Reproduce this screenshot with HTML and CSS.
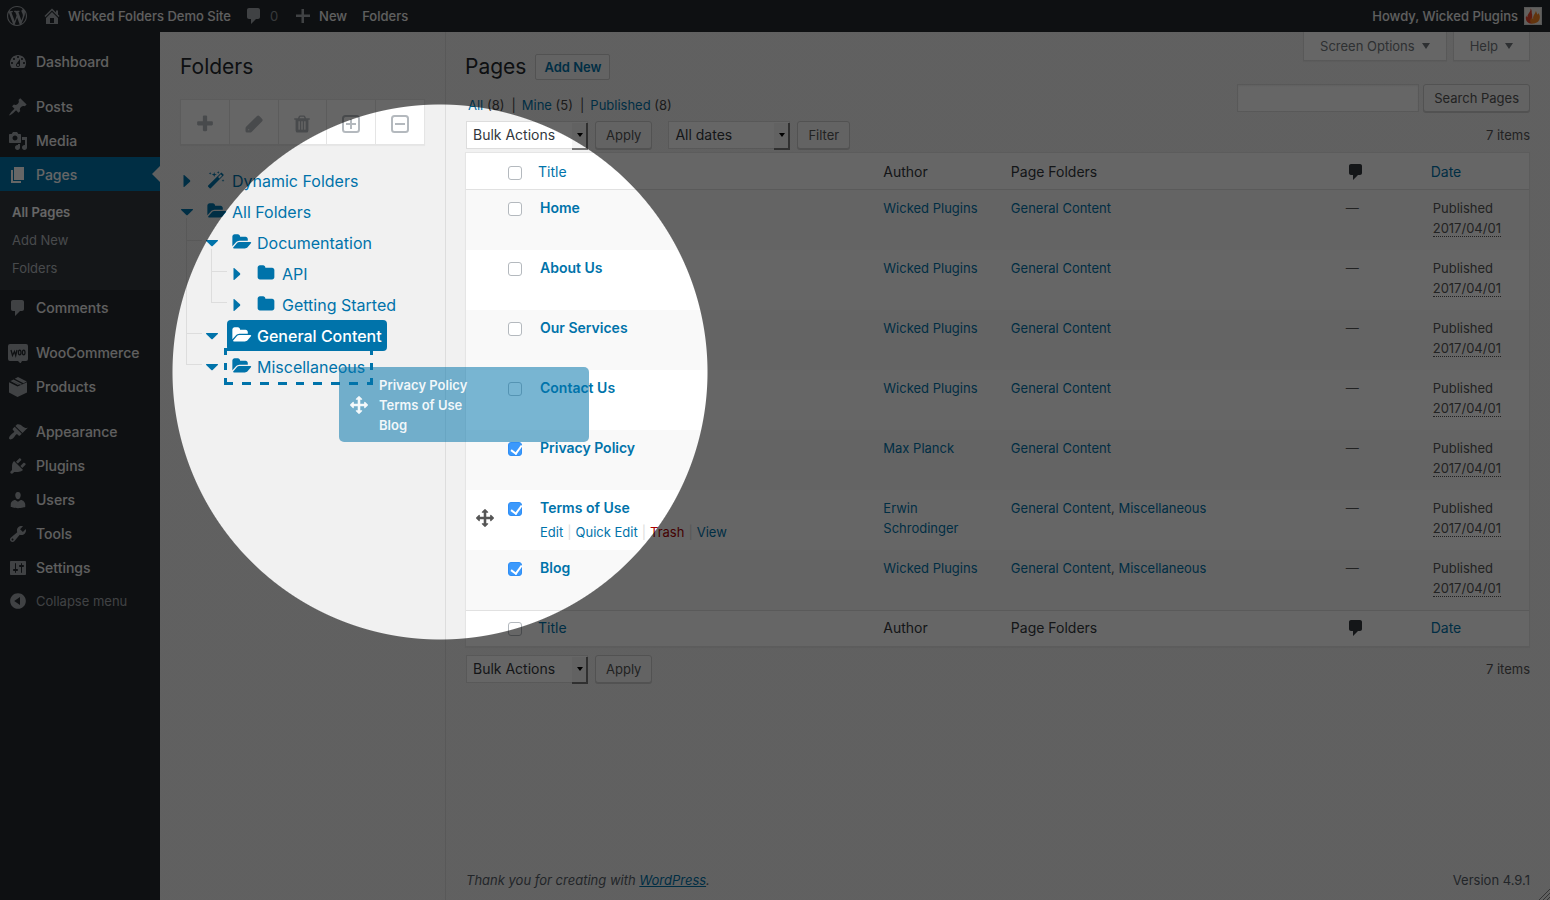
FILE: index.html
```html
<!DOCTYPE html>
<html lang="en">
<head>
<meta charset="utf-8">
<title>Pages ‹ Wicked Folders Demo Site — WordPress</title>
<link rel="stylesheet" href="styles.css">
</head>
<body>
<svg class="sprite" aria-hidden="true">
  <symbol id="i-wordpress" viewBox="0 0 20 20"><path d="M20 10c0-5.51-4.49-10-10-10C4.48 0 0 4.49 0 10c0 5.52 4.48 10 10 10 5.51 0 10-4.48 10-10zM7.78 15.37L4.37 6.22c.55-.02 1.17-.08 1.17-.08.5-.06.44-1.13-.06-1.11 0 0-1.45.11-2.37.11-.18 0-.37 0-.58-.01C4.12 2.69 6.87 1.11 10 1.11c2.33 0 4.45.87 6.05 2.34-.68-.11-1.65.39-1.65 1.58 0 .74.45 1.36.9 2.1.35.61.55 1.36.55 2.46 0 1.49-1.4 5-1.4 5l-3.03-8.37c.54-.02.82-.17.82-.17.5-.05.44-1.25-.06-1.22 0 0-1.44.12-2.38.12-.87 0-2.33-.12-2.33-.12-.5-.03-.56 1.2-.06 1.22l.92.08 1.26 3.41zM17.41 10c.24-.64.74-1.87.43-4.25.7 1.29 1.05 2.71 1.05 4.25 0 3.29-1.73 6.24-4.4 7.78.97-2.59 1.94-5.2 2.92-7.78zM6.1 18.09C3.12 16.65 1.11 13.53 1.11 10c0-1.3.23-2.48.72-3.59C3.25 10.3 4.67 14.2 6.1 18.09zm4.03-6.63l2.58 6.98c-.86.29-1.76.45-2.71.45-.79 0-1.57-.11-2.29-.33.81-2.38 1.62-4.74 2.42-7.1z"/></symbol>
  <symbol id="i-home" viewBox="0 0 20 20"><path d="M16 8.500l1.530 1.530-1.060 1.060L10 4.600l-6.470 6.490-1.060-1.060L10 2.500l4 4v-2h2v4zm-6-2.460l6 5.990V18H4v-5.970zM12 17v-5H8v5h4z"/></symbol>
  <symbol id="i-comment" viewBox="0 0 20 20"><path d="M5 2h9c1.100 0 2 .9 2 2v7c0 1.100-.9 2-2 2h-2l-5 5v-5H5c-1.100 0-2-.9-2-2V4c0-1.100.9-2 2-2z"/></symbol>
  <symbol id="i-new" viewBox="0 0 20 20"><path d="M8.500 3h2.500v5.500H17V11h-6v6H8.500v-6H3V8.500h5.500z"/></symbol>
  <symbol id="i-dashboard" viewBox="0 0 20 20"><path d="M3.760 16h12.480c1.100-1.370 1.760-3.110 1.760-5 0-4.420-3.580-8-8-8s-8 3.580-8 8c0 1.890.66 3.630 1.760 5zM10 4c.55 0 1 .45 1 1s-.45 1-1 1-1-.45-1-1 .45-1 1-1zM6 6c.55 0 1 .45 1 1s-.45 1-1 1-1-.45-1-1 .45-1 1-1zm8 0c.55 0 1 .45 1 1s-.45 1-1 1-1-.45-1-1 .45-1 1-1zm-5.370 5.550L12 7v6c0 1.100-.9 2-2 2s-2-.9-2-2c0-.57.24-1.080.63-1.450zM4 10c.55 0 1 .45 1 1s-.45 1-1 1-1-.45-1-1 .45-1 1-1zm12 0c.55 0 1 .45 1 1s-.45 1-1 1-1-.45-1-1 .45-1 1-1zm-5 3c0-.55-.45-1-1-1s-1 .45-1 1 .45 1 1 1 1-.45 1-1z"/></symbol>
  <symbol id="i-post" viewBox="0 0 20 20"><path d="M10.440 3.020l1.820-1.820 6.360 6.350-1.830 1.820c-1.050-.68-2.480-.57-3.410.36l-.75.75c-.92.93-1.040 2.350-.35 3.410l-1.830 1.820-2.410-2.410-2.800 2.790c-.42.42-3.380 2.710-3.800 2.290s1.860-3.390 2.280-3.810l2.790-2.790L4.100 9.360l1.830-1.820c1.050.69 2.480.57 3.400-.36l.75-.75c.93-.92 1.050-2.350.36-3.410z"/></symbol>
  <symbol id="i-media" viewBox="0 0 20 20"><path d="M13 11V4c0-.55-.45-1-1-1h-1.670L9 1H5L3.670 3H2c-.55 0-1 .45-1 1v7c0 .55.45 1 1 1h10c.55 0 1-.45 1-1zM7 4.500c1.380 0 2.500 1.120 2.500 2.500S8.380 9.500 7 9.500 4.500 8.380 4.500 7 5.620 4.500 7 4.500zM14 6h5v10.500c0 1.380-1.120 2.500-2.500 2.500S14 17.880 14 16.500s1.120-2.500 2.500-2.500c.17 0 .34.02.5.05V9h-3V6zm-4 8.050V13h2v3.500c0 1.380-1.120 2.500-2.500 2.500S7 17.880 7 16.500 8.120 14 9.500 14c.17 0 .34.02.5.05z"/></symbol>
  <symbol id="i-page" viewBox="0 0 20 20"><path d="M6 15V2h10v13H6zm-1 1h8v2H3V5h2v11z"/></symbol>
  <symbol id="i-woo" viewBox="0 0 20 20"><path d="M2 1h16a2 2 0 0 1 2 2v13a2 2 0 0 1-2 2h-4l-1.500 2.500L10 18H2a2 2 0 0 1-2-2V3a2 2 0 0 1 2-2z"/><path class="cut" d="M3 7l1.500 5.500L6.500 8.500l1.200 4L9 7"/><ellipse class="cut" cx="11.700" cy="9.500" rx="1.300" ry="2.300"/><ellipse class="cut" cx="15.700" cy="9.500" rx="1.300" ry="2.300"/></symbol>
  <symbol id="i-product" viewBox="0 0 20 20"><path d="M10 0l8.800 4.500-3.300 1.700-8.700-4.500zM5.500 2.400l8.600 4.500-1.800.9-8.600-4.400zM2.400 4.100L10 8.100l1.200-.6-7.600-3.900zM1 5.200l8.500 4.300V20L1 15.500zM19 5.200V15.500L9.500 20V9.500z"/></symbol>
  <symbol id="i-appearance" viewBox="0 0 20 20"><path d="M14.480 11.060L7.410 3.990l1.500-1.500c.5-.56 2.300-.47 3.510.32 1.210.8 1.430 1.280 2.910 2.100 1.180.64 2.450 1.260 4.450.85zm-.71.71L6.700 4.700 4.930 6.470c-.39.39-.39 1.020 0 1.410l1.060 1.060c.39.39.39 1.030 0 1.420-.6.6-1.430 1.110-2.210 1.690-.35.26-.7.53-1.010.84C1.430 14.230.4 16.080 1.400 17.070c.99 1 2.840-.03 4.180-1.360.31-.31.58-.66.85-1.020.57-.78 1.080-1.610 1.690-2.210.39-.39 1.020-.39 1.410 0l1.060 1.060c.39.39 1.020.39 1.410 0z"/></symbol>
  <symbol id="i-plugins" viewBox="0 0 20 20"><path d="M13.110 4.360L9.870 7.600 8 5.730l3.240-3.240c.35-.34 1.050-.2 1.560.32.52.51.66 1.210.31 1.550zm-8 1.770l.91-1.120 9.010 9.010-1.190.84c-.71.71-2.630 1.160-3.820 1.160H6.140L4.900 17.260c-.59.59-1.540.59-2.120 0-.59-.58-.59-1.530 0-2.120l1.240-1.240v-3.880c0-1.130.4-3.190 1.090-3.890zm7.260 3.970l3.240-3.240c.34-.35 1.040-.21 1.550.31.52.51.66 1.210.31 1.550l-3.240 3.250z"/></symbol>
  <symbol id="i-users" viewBox="0 0 20 20"><path d="M10 9.250c-2.270 0-2.730-3.440-2.730-3.440C7 4.020 7.820 2 9.970 2c2.160 0 2.980 2.020 2.710 3.810 0 0-.41 3.440-2.680 3.440zm0 2.570L12.720 10c2.390 0 4.520 2.330 4.520 4.530v2.490s-3.650 1.130-7.240 1.130c-3.650 0-7.240-1.130-7.240-1.130v-2.490c0-2.250 1.940-4.480 4.470-4.480z"/></symbol>
  <symbol id="i-tools" viewBox="0 0 20 20"><path d="M16.680 9.770c-1.340 1.340-3.300 1.670-4.950.99l-5.410 6.520c-.99.99-2.590.99-3.580 0s-.99-2.590 0-3.570l6.520-5.420c-.68-1.650-.35-3.610.99-4.950 1.280-1.280 3.120-1.620 4.720-1.060l-2.890 2.890 2.820 2.820 2.860-2.870c.53 1.580.18 3.390-1.080 4.650zM3.810 16.210c.4.39 1.040.39 1.430 0 .4-.4.4-1.040 0-1.430-.39-.4-1.030-.4-1.430 0-.39.39-.39 1.030 0 1.430z"/></symbol>
  <symbol id="i-settings" viewBox="0 0 20 20"><path d="M18 16V4c0-.55-.45-1-1-1H3c-.55 0-1 .45-1 1v12c0 .55.45 1 1 1h14c.55 0 1-.45 1-1zM8 11h1c.55 0 1 .45 1 1s-.45 1-1 1H8v1.500c0 .28-.22.5-.5.5s-.5-.22-.5-.5V13H6c-.55 0-1-.45-1-1s.45-1 1-1h1V5.500c0-.28.22-.5.5-.5s.5.22.5.5V11zm5-2h-1c-.55 0-1-.45-1-1s.45-1 1-1h1V5.500c0-.28.22-.5.5-.5s.5.22.5.5V7h1c.55 0 1 .45 1 1s-.45 1-1 1h-1v5.500c0 .28-.22.5-.5.5s-.5-.22-.5-.5V9z"/></symbol>
  <symbol id="i-collapse" viewBox="0 0 20 20"><path fill-rule="evenodd" d="M10 2.160c4.330 0 7.840 3.510 7.840 7.840s-3.510 7.840-7.840 7.840S2.160 14.330 2.160 10 5.670 2.160 10 2.160zm2 11.720V6.120L6.180 9.970z"/></symbol>
  <symbol id="i-plus" viewBox="0 0 1792 1792"><path d="M1600 736v192q0 40-28 68t-68 28h-416v416q0 40-28 68t-68 28h-192q-40 0-68-28t-28-68v-416h-416q-40 0-68-28t-28-68v-192q0-40 28-68t68-28h416v-416q0-40 28-68t68-28h192q40 0 68 28t28 68v416h416q40 0 68 28t28 68z"/></symbol>
  <symbol id="i-pencil" viewBox="0 0 20 20"><path fill-rule="evenodd" d="M12.800 2.300a2 2 0 0 1 2.800 0l2.400 2.400a2 2 0 0 1 0 2.800L7.600 17.900q-.6.600-1.500.600H3q-1.500 0-1.500-1.500v-2.800q0-.9.6-1.500zM4.200 15.200v1h1v-1z"/></symbol>
  <symbol id="i-trash" viewBox="0 0 1792 1792"><path d="M704 1376v-704q0-14-9-23t-23-9h-64q-14 0-23 9t-9 23v704q0 14 9 23t23 9h64q14 0 23-9t9-23zm256 0v-704q0-14-9-23t-23-9h-64q-14 0-23 9t-9 23v704q0 14 9 23t23 9h64q14 0 23-9t9-23zm256 0v-704q0-14-9-23t-23-9h-64q-14 0-23 9t-9 23v704q0 14 9 23t23 9h64q14 0 23-9t9-23zm-544-992h448l-48-117q-7-9-17-11h-317q-10 2-17 11zm928 32v64q0 14-9 23t-23 9h-96v948q0 83-47 143.500t-113 60.500h-832q-66 0-113-58.500t-47-141.500v-952h-96q-14 0-23-9t-9-23v-64q0-14 9-23t23-9h309l70-167q15-37 54-63t79-26h320q40 0 79 26t54 63l70 167h309q14 0 23 9t9 23z"/></symbol>
  <symbol id="i-expand" viewBox="0 0 20 20"><rect class="line" x="2" y="2" width="16" height="16" rx="2.500"/><path class="line" d="M10 5v10M5 10h10"/></symbol>
  <symbol id="i-shrink" viewBox="0 0 20 20"><rect class="line" x="2" y="2" width="16" height="16" rx="2.500"/><path class="line" d="M5 10h10"/></symbol>
  <symbol id="i-magic" viewBox="0 0 20 20"><path fill-rule="evenodd" d="M1.300 16.200L15.400 2.100q.6-.6 1.200 0l1.700 1.700q.6.600 0 1.200L4.200 19.100q-.6.600-1.200 0l-1.700-1.700q-.6-.6 0-1.200zM12.300 6.700l1.500 1.500 3-3-1.500-1.500z"/><path d="M3.500 1l.4 1.200 1.200.4-1.200.4-.4 1.200-.4-1.200-1.200-.4 1.200-.4zM8 1l.7 2.200 2.200.7-2.200.7L8 6.800l-.7-2.200-2.200-.7 2.200-.7zM12.500 0l.4 1.200 1.200.4-1.200.4-.4 1.200-.4-1.200-1.200-.4 1.200-.4zM17.800 9l.4 1.200 1.200.4-1.200.4-.4 1.200-.4-1.200-1.200-.4 1.200-.4z"/></symbol>
  <symbol id="i-open" viewBox="0 0 1920 1792"><path d="M1879 952q0 31-31 66l-336 396q-43 51-120.500 86.500t-143.500 35.500h-1088q-34 0-60.500-13t-26.500-43q0-31 31-66l336-396q43-51 120.500-86.500t143.500-35.500h1088q34 0 60.500 13t26.500 43zm-343-344v160h-832q-94 0-197 47.500t-164 119.500l-337 396-5 6q0-4-.5-12.500t-.5-12.500v-960q0-92 66-158t158-66h320q92 0 158 66t66 158v32h544q92 0 158 66t66 158z"/></symbol>
  <symbol id="i-folder" viewBox="0 0 1792 1792"><path d="M1728 608v704q0 92-66 158t-158 66h-1216q-92 0-158-66t-66-158v-960q0-92 66-158t158-66h320q92 0 158 66t66 158v32h672q92 0 158 66t66 158z"/></symbol>
  <symbol id="i-right" viewBox="0 0 14 14"><path d="M3.500 1.500q0-1 1-.3L10 6.300q.6.700 0 1.400l-5.500 5.100q-1 .7-1-.3z"/></symbol>
  <symbol id="i-down" viewBox="0 0 14 14"><path d="M1.500 4h11q1 0 .3 1L7.700 10q-.7.600-1.400 0L1.200 5q-.7-1 .3-1z"/></symbol>
  <symbol id="i-move" viewBox="0 0 1792 1792"><path d="M1792 896q0 26-19 45l-256 256q-19 19-45 19t-45-19-19-45v-128h-384v384h128q26 0 45 19t19 45-19 45l-256 256q-19 19-45 19t-45-19l-256-256q-19-19-19-45t19-45 45-19h128v-384h-384v128q0 26-19 45t-45 19-45-19l-256-256q-19-19-19-45t19-45l256-256q19-19 45-19t45 19 19 45v128h384v-384h-128q-26 0-45-19t-19-45 19-45l256-256q19-19 45-19t45 19l256 256q19 19 19 45t-19 45-45 19h-128v384h384v-128q0-26 19-45t45-19 45 19l256 256q19 19 19 45z"/></symbol>
</svg>

<header class="adminbar">
  <nav class="bar-group" aria-label="Toolbar">
    <a href="#" aria-label="About WordPress"><svg class="icon"><use href="#i-wordpress"/></svg></a>
    <a class="bar-site" href="#"><svg class="icon"><use href="#i-home"/></svg>Wicked Folders Demo Site</a>
    <a class="bar-comments" href="#"><svg class="icon"><use href="#i-comment"/></svg><span class="dim">0</span></a>
    <a class="bar-new" href="#"><svg class="icon"><use href="#i-new"/></svg>New</a>
    <a class="bar-folders" href="#">Folders</a>
  </nav>
  <a class="bar-user" href="#">Howdy, Wicked Plugins
    <svg class="avatar" viewBox="0 0 18 18"><rect width="18" height="18" fill="#d8d8d8"/><rect x="1" y="1" width="16" height="16" fill="#f4efe9"/><path fill="#e8432a" d="M6.500 1.500c2 2 .8 4 1.600 5.500L8.500 16.500H6C2.500 15.500 1 12 2.200 8.500c.3 1 .6 1.500 1.300 1.800C3 7 7 5 6.500 1.500z"/><path fill="#f58220" d="M12 2.500c-.5 2 1 3 1.300 5 .7-.3 1-.8 1.200-1.500 1 1.500 1.500 3 1.300 5-.3 3-2.500 5-5.800 5.500H7.500c-2-1.500-1.700-4.200.5-6 .1 1 .6 1.500 1.200 1.700C8.500 8 12.300 6.500 12 2.500z"/></svg>
  </a>
</header>

<div class="shell">
  <nav class="sidebar" aria-label="Main menu">
    <ul class="menu">
      <li><a href="#"><svg class="icon"><use href="#i-dashboard"/></svg>Dashboard</a></li>
      <li class="gap"><a href="#"><svg class="icon"><use href="#i-post"/></svg>Posts</a></li>
      <li><a href="#"><svg class="icon"><use href="#i-media"/></svg>Media</a></li>
      <li><a class="current" href="#"><svg class="icon"><use href="#i-page"/></svg>Pages</a>
        <ul class="submenu">
          <li><a class="active" href="#">All Pages</a></li>
          <li><a href="#">Add New</a></li>
          <li><a href="#">Folders</a></li>
        </ul>
      </li>
      <li><a href="#"><svg class="icon"><use href="#i-comment"/></svg>Comments</a></li>
      <li class="gap"><a href="#"><svg class="icon"><use href="#i-woo"/></svg>WooCommerce</a></li>
      <li><a href="#"><svg class="icon"><use href="#i-product"/></svg>Products</a></li>
      <li class="gap"><a href="#"><svg class="icon"><use href="#i-appearance"/></svg>Appearance</a></li>
      <li><a href="#"><svg class="icon"><use href="#i-plugins"/></svg>Plugins</a></li>
      <li><a href="#"><svg class="icon"><use href="#i-users"/></svg>Users</a></li>
      <li><a href="#"><svg class="icon"><use href="#i-tools"/></svg>Tools</a></li>
      <li><a href="#"><svg class="icon"><use href="#i-settings"/></svg>Settings</a></li>
      <li><button class="collapse" type="button"><svg class="icon"><use href="#i-collapse"/></svg>Collapse menu</button></li>
    </ul>
  </nav>

  <aside class="folders">
    <h2 class="heading">Folders</h2>
    <div class="toolbar">
      <button type="button" aria-label="Add folder"><svg><use href="#i-plus"/></svg></button>
      <button type="button" aria-label="Edit folder"><svg><use href="#i-pencil"/></svg></button>
      <button type="button" aria-label="Delete folder"><svg><use href="#i-trash"/></svg></button>
      <button type="button" aria-label="Expand all"><svg><use href="#i-expand"/></svg></button>
      <button type="button" aria-label="Collapse all"><svg><use href="#i-shrink"/></svg></button>
    </div>
    <ul class="tree">
      <li><div class="node"><button class="toggle" type="button" aria-label="Expand"><svg><use href="#i-right"/></svg></button><a href="#"><svg><use href="#i-magic"/></svg>Dynamic Folders</a></div></li>
      <li><div class="node"><button class="toggle" type="button" aria-label="Collapse"><svg><use href="#i-down"/></svg></button><a href="#"><svg class="wide"><use href="#i-open"/></svg>All Folders</a></div>
        <ul>
          <li><div class="node"><button class="toggle" type="button" aria-label="Collapse"><svg><use href="#i-down"/></svg></button><a href="#"><svg class="wide"><use href="#i-open"/></svg>Documentation</a></div>
            <ul>
              <li><div class="node"><button class="toggle" type="button" aria-label="Expand"><svg><use href="#i-right"/></svg></button><a href="#"><svg><use href="#i-folder"/></svg>API</a></div></li>
              <li><div class="node"><button class="toggle" type="button" aria-label="Expand"><svg><use href="#i-right"/></svg></button><a href="#"><svg><use href="#i-folder"/></svg>Getting Started</a></div></li>
            </ul>
          </li>
          <li><div class="node"><button class="toggle" type="button" aria-label="Collapse"><svg><use href="#i-down"/></svg></button><a class="selected" href="#"><svg class="wide"><use href="#i-open"/></svg>General Content</a></div></li>
          <li><div class="node"><button class="toggle" type="button" aria-label="Collapse"><svg><use href="#i-down"/></svg></button><a class="drop-target" href="#"><svg class="wide"><use href="#i-open"/></svg>Miscellaneous</a></div></li>
        </ul>
      </li>
    </ul>
  </aside>

  <main class="content">
    <div class="top">
      <div class="title"><h1 class="heading">Pages</h1><a class="add-new" href="#">Add New</a></div>
      <div class="screen-meta">
        <button type="button">Screen Options<span class="tri"></span></button>
        <button type="button">Help<span class="tri"></span></button>
      </div>
    </div>

    <div class="filters">
      <ul class="views">
        <li><a href="#">All</a> (8)</li>
        <li><a href="#">Mine</a> (5)</li>
        <li><a href="#">Published</a> (8)</li>
      </ul>
      <form class="search">
        <input type="search" aria-label="Search pages">
        <button class="button" type="button">Search Pages</button>
      </form>
    </div>

    <div class="tablenav">
      <span class="select"><select aria-label="Bulk action"><option>Bulk Actions</option></select></span>
      <button class="button" type="button">Apply</button>
      <span class="select dates"><select aria-label="Filter by date"><option>All dates</option></select></span>
      <button class="button" type="button">Filter</button>
      <span class="count">7 items</span>
    </div>

    <table class="list">
      <colgroup><col class="c-move"><col class="c-check"><col><col class="c-author"><col class="c-folders"><col class="c-comments"><col class="c-date"></colgroup>
      <thead>
        <tr><td></td><td><input type="checkbox" aria-label="Select all"></td><th class="sort"><a href="#">Title</a></th><th>Author</th><th>Page Folders</th><th><svg class="bubble" role="img" aria-label="Comments"><use href="#i-comment"/></svg></th><th class="sort"><a href="#">Date</a></th></tr>
      </thead>
      <tbody>
        <tr><td></td><td><input type="checkbox" aria-label="Select Home"></td><td><a class="row-title" href="#">Home</a></td><td><a href="#">Wicked Plugins</a></td><td><a href="#">General Content</a></td><td>—</td><td>Published<br><abbr>2017/04/01</abbr></td></tr>
        <tr><td></td><td><input type="checkbox" aria-label="Select About Us"></td><td><a class="row-title" href="#">About Us</a></td><td><a href="#">Wicked Plugins</a></td><td><a href="#">General Content</a></td><td>—</td><td>Published<br><abbr>2017/04/01</abbr></td></tr>
        <tr><td></td><td><input type="checkbox" aria-label="Select Our Services"></td><td><a class="row-title" href="#">Our Services</a></td><td><a href="#">Wicked Plugins</a></td><td><a href="#">General Content</a></td><td>—</td><td>Published<br><abbr>2017/04/01</abbr></td></tr>
        <tr><td></td><td><input type="checkbox" aria-label="Select Contact Us"></td><td><a class="row-title" href="#">Contact Us</a></td><td><a href="#">Wicked Plugins</a></td><td><a href="#">General Content</a></td><td>—</td><td>Published<br><abbr>2017/04/01</abbr></td></tr>
        <tr><td></td><td><input type="checkbox" aria-label="Select Privacy Policy" checked></td><td><a class="row-title" href="#">Privacy Policy</a></td><td><a href="#">Max Planck</a></td><td><a href="#">General Content</a></td><td>—</td><td>Published<br><abbr>2017/04/01</abbr></td></tr>
        <tr><td class="mover"><svg class="move"><use href="#i-move"/></svg></td><td><input type="checkbox" aria-label="Select Terms of Use" checked></td><td><a class="row-title" href="#">Terms of Use</a><div class="row-actions"><a href="#">Edit</a><i>|</i><a href="#">Quick Edit</a><i>|</i><a class="danger" href="#">Trash</a><i>|</i><a href="#">View</a></div></td><td><a href="#">Erwin Schrodinger</a></td><td><a href="#">General Content</a>, <a href="#">Miscellaneous</a></td><td>—</td><td>Published<br><abbr>2017/04/01</abbr></td></tr>
        <tr><td></td><td><input type="checkbox" aria-label="Select Blog" checked></td><td><a class="row-title" href="#">Blog</a></td><td><a href="#">Wicked Plugins</a></td><td><a href="#">General Content</a>, <a href="#">Miscellaneous</a></td><td>—</td><td>Published<br><abbr>2017/04/01</abbr></td></tr>
      </tbody>
      <tfoot>
        <tr><td></td><td><input type="checkbox" aria-label="Select all"></td><th class="sort"><a href="#">Title</a></th><th>Author</th><th>Page Folders</th><th><svg class="bubble" role="img" aria-label="Comments"><use href="#i-comment"/></svg></th><th class="sort"><a href="#">Date</a></th></tr>
      </tfoot>
    </table>

    <div class="tablenav bottom">
      <span class="select"><select aria-label="Bulk action"><option>Bulk Actions</option></select></span>
      <button class="button" type="button">Apply</button>
      <span class="count">7 items</span>
    </div>

    <footer class="footer">
      <em>Thank you for creating with <a href="#">WordPress</a>.</em>
      <span>Version 4.9.1</span>
    </footer>
  </main>
</div>

<div class="drag-helper">
  <svg class="move"><use href="#i-move"/></svg>
  <ul><li>Privacy Policy</li><li>Terms of Use</li><li>Blog</li></ul>
</div>
<div class="spotlight"></div>
<svg class="grip" viewBox="0 0 12 12" aria-hidden="true"><path d="M1 12L12 1M5 12l7-7M9 12l3-3"/></svg>
</body>
</html>
```
FILE: styles.css
```css
* { box-sizing: border-box; }

body {
  margin: 0;
  min-height: 100vh;
  position: relative;
  display: flex;
  flex-direction: column;
  background: #f1f1f1;
  color: #444;
  font: 13px/20px Inter, "Liberation Sans", sans-serif;
}

ul { list-style: none; margin: 0; padding: 0; }
a { color: #0073aa; text-decoration: none; }
button, input, select { font: inherit; color: inherit; margin: 0; }
button { cursor: pointer; }
svg { fill: currentColor; flex: none; }
.sprite { position: absolute; width: 0; height: 0; }
.icon { width: 20px; height: 20px; }
.cut { fill: none; stroke: #23282d; stroke-width: 1.300; }
.line { fill: none; stroke: currentColor; stroke-width: 2; }

/* Admin bar */
.adminbar {
  height: 32px;
  display: flex;
  justify-content: space-between;
  padding: 0 8px 0 7px;
  background: #23282d;
  color: #eee;
  font-weight: 500;
}
.adminbar a { display: flex; align-items: center; gap: 6px; color: inherit; }
.adminbar .icon { color: #a0a5aa; }
.bar-group { display: flex; }
.bar-site { margin-left: 15px; }
.bar-comments { margin-left: 13px; }
.bar-new { margin-left: 15px; }
.bar-folders { margin-left: 15px; }
.dim { color: #8a8f94; font-weight: 400; }
.avatar { width: 18px; height: 18px; }

.shell { flex: 1; display: flex; }

/* Main menu */
.sidebar { width: 160px; flex: none; background: #23282d; padding-top: 12px; }
.menu .gap { margin-top: 11px; }
.menu a, .collapse {
  display: flex;
  align-items: center;
  gap: 8px;
  width: 100%;
  height: 34px;
  padding: 2px 8px 0;
  color: #eee;
  font-size: 14px;
  font-weight: 500;
}
.menu .icon { color: #a0a5aa; }
.menu .current { position: relative; background: #0073aa; color: #fff; }
.menu .current .icon { color: #fff; }
.menu .current::after {
  content: "";
  position: absolute;
  right: 0;
  top: 9px;
  border: 8px solid transparent;
  border-right-color: #f1f1f1;
  border-left: 0;
}
.submenu { background: #32373c; padding: 7px 0 8px; }
.menu .submenu a { height: 28px; padding: 0 12px; font-size: 13px; font-weight: 400; color: #b4b9be; }
.menu .submenu .active { color: #fff; font-weight: 600; }
.menu .collapse { border: 0; background: none; padding-top: 0; color: #a0a5aa; font-size: 13px; font-weight: 400; }

/* Folder pane */
.folders { width: 286px; flex: none; padding: 20px 20px 0; border-right: 1px solid #ddd; }
.heading { margin: 0; font-size: 21px; line-height: 30px; font-weight: 400; color: #23282d; }
.toolbar {
  display: flex;
  height: 46px;
  margin-top: 17px;
  border: 1px solid #e5e5e5;
  background: #fff;
  box-shadow: 0 1px 1px rgba(0, 0, 0, .04);
}
.toolbar button {
  flex: 1;
  display: flex;
  align-items: center;
  justify-content: center;
  padding: 4px 0 0;
  border: 0;
  background: none;
  color: #b4b9be;
}
.toolbar button:not(:last-child) { border-right: 1px solid #e5e5e5; }
.toolbar svg { width: 20px; height: 20px; }
.tree { margin-top: 20px; font-size: 16px; }
.tree ul { padding-left: 25px; }
.tree li { position: relative; }
.tree ul > li::before {
  content: "";
  position: absolute;
  left: -19px;
  top: -9px;
  bottom: 0;
  width: 16px;
  border-left: 1px solid #ddd;
}
.tree ul > li:last-child::before { bottom: auto; height: 23px; }
.tree ul > li::after {
  content: "";
  position: absolute;
  left: -18px;
  top: 13px;
  width: 15px;
  border-top: 1px solid #ddd;
}
.node { display: flex; align-items: center; gap: 8px; height: 31px; }
.toggle { width: 14px; height: 18px; padding: 0; border: 0; background: none; color: #0073aa; }
.toggle svg { display: block; width: 14px; height: 14px; }
.node a { display: flex; align-items: center; height: 31px; padding: 0 5px; border-radius: 4px; }
.node a svg { width: 18px; height: 18px; margin: 0 7px 2px 0; }
.node a .wide { width: 20px; margin-right: 5px; }
.node .selected { position: relative; z-index: 1; background: #0073aa; color: #fff; font-weight: 500; }
.node .drop-target { position: relative; }
.drop-target::after {
  --across: repeating-linear-gradient(90deg, #0073aa 0 6%, transparent 6% 12%);
  --down: repeating-linear-gradient(#0073aa 0 18%, transparent 18% 41%);
  content: "";
  position: absolute;
  inset: -3px;
  background:
    var(--across) top / 100% 3px no-repeat,
    var(--across) bottom / 100% 3px no-repeat,
    var(--down) left / 3px 100% no-repeat,
    var(--down) right / 3px 100% no-repeat;
}

/* Page list */
.content { flex: 1; min-width: 0; display: flex; flex-direction: column; padding: 0 20px 0 19px; }
.top { display: flex; justify-content: space-between; align-items: flex-start; height: 52px; }
.title { display: flex; align-items: center; gap: 9px; padding-top: 20px; }
.add-new {
  padding: 2px 8px;
  border: 1px solid #ccc;
  border-radius: 2px;
  background: #f7f7f7;
  font-weight: 600;
}
.screen-meta { display: flex; gap: 6px; }
.screen-meta button {
  display: flex;
  align-items: center;
  gap: 7px;
  height: 29px;
  padding: 0 16px;
  border: 1px solid #ddd;
  border-top: 0;
  background: #fff;
  color: #72777c;
  box-shadow: 0 1px 1px rgba(0, 0, 0, .04);
}
.tri { border: 4px solid transparent; border-top: 6px solid #72777c; border-bottom: 0; }
.filters { display: flex; justify-content: space-between; align-items: flex-end; }
.views { display: flex; padding: 0 0 1px 3px; line-height: 18px; }
.views li + li::before { content: "|"; padding: 0 6px 0 7px; }
.search { display: flex; gap: 4px; padding-bottom: 3px; }
.search input { width: 182px; height: 28px; border: 1px solid #ddd; background: #fff; box-shadow: inset 0 1px 2px rgba(0, 0, 0, .07); }
.button {
  height: 28px;
  padding: 0 10px;
  border: 1px solid #ccc;
  border-radius: 3px;
  background: #f7f7f7;
  color: #555;
  box-shadow: 0 1px 0 #ccc;
}
.tablenav { display: flex; align-items: center; gap: 7px; padding: 6px 0 3px 1px; }
.tablenav.bottom { padding-top: 8px; }
.select { position: relative; width: 122px; height: 28px; }
.select select {
  appearance: none;
  width: 100%;
  height: 28px;
  padding: 0 16px 0 6px;
  border: 1px solid #ddd;
  border-radius: 0;
  background: #fff;
  color: #32373c;
  font-size: 14px;
}
.select::before {
  content: "";
  position: absolute;
  right: 0;
  top: 2px;
  width: 14px;
  height: 25px;
  background: #f4f4f4;
  border-right: 2px solid #777;
  border-bottom: 2px solid #777;
  pointer-events: none;
}
.select::after {
  content: "";
  position: absolute;
  right: 5px;
  top: 12px;
  border: 3px solid transparent;
  border-top: 4px solid #000;
  border-bottom: 0;
  pointer-events: none;
}
.dates { margin-left: 9px; }
.count { margin-left: auto; color: #555; }

.list {
  width: 100%;
  table-layout: fixed;
  border: 1px solid #e5e5e5;
  border-spacing: 0;
  background: #fff;
  color: #555;
  box-shadow: 0 1px 1px rgba(0, 0, 0, .04);
}
.c-move, .c-check { width: 32px; }
.c-author { width: 12%; }
.c-folders { width: 31.5%; }
.c-comments { width: 87px; }
.c-date { width: 10%; }
.list td, .list th { padding: 8px 10px; text-align: left; vertical-align: top; font-weight: 400; }
.list th { color: #32373c; font-size: 14px; }
.list thead th { padding: 9px 10px 7px; }
.list .sort { padding-left: 8px; }
.list thead tr { height: 37px; }
.list tfoot tr { height: 36px; }
.list tbody tr { height: 60px; }
.list tbody tr:nth-child(odd) { background: #f9f9f9; }
.list thead td, .list thead th { border-bottom: 1px solid #e1e1e1; }
.list tfoot td, .list tfoot th { border-top: 1px solid #e1e1e1; }
.list tfoot th, .list tfoot td { padding: 7px 10px 8px; }
.list tfoot .sort { padding-left: 8px; }
.list input {
  appearance: none;
  display: block;
  width: 14px;
  height: 14px;
  margin-top: 4px;
  border: 1px solid #b4b9be;
  border-radius: 3px;
  background: #fff;
}
.list thead input { margin-top: 5px; }
.list input:checked { border-color: #2f8ef5; background: #3b99fc; }
.list input:checked::before {
  content: "";
  display: block;
  width: 5px;
  height: 9px;
  margin-left: 4px;
  border: solid #fff;
  border-width: 0 2px 2px 0;
  transform: rotate(36deg);
}
.row-title { font-size: 14px; font-weight: 600; }
.row-actions { padding-top: 4px; white-space: nowrap; }
.row-actions i { padding: 0 4px; color: #ddd; font-style: normal; }
.row-actions .danger { color: #a00; }
.list abbr { border-bottom: 1px dotted #555; }
.bubble { display: block; width: 20px; height: 20px; }
.move { width: 18px; height: 18px; }
.list .mover { padding-top: 19px; }
.mover svg { display: block; }

.footer { display: flex; justify-content: space-between; margin-top: auto; padding: 10px 0 10px 1px; color: #555d66; }
.footer a { text-decoration: underline; }

/* Layers over the page */
.drag-helper {
  position: absolute;
  z-index: 2;
  left: 339px;
  top: 367px;
  width: 250px;
  display: flex;
  align-items: center;
  gap: 11px;
  padding: 8px 11px 7px;
  border-radius: 5px;
  background: rgba(0, 115, 170, .53);
  color: rgba(255, 255, 255, .92);
  font-weight: 600;
}
.spotlight {
  position: absolute;
  inset: 0;
  z-index: 5;
  background: radial-gradient(circle at 440px 372px, transparent 267px, rgba(0, 0, 0, .6) 268px);
  pointer-events: none;
}
.grip { position: absolute; right: 0; bottom: 0; z-index: 6; width: 12px; height: 12px; fill: none; stroke: #333; }
```
